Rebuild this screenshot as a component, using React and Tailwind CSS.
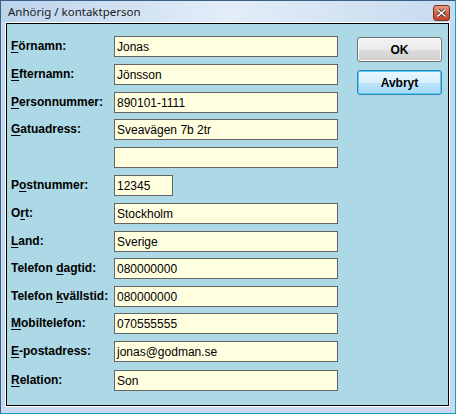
const fields = [
  { label: 'Förnamn:', key: 0, value: 'Jonas', gap: '' },
  { label: 'Efternamn:', key: 0, value: 'Jönsson', gap: 'mt-[7px]' },
  { label: 'Personnummer:', key: 0, value: '890101-1111', gap: 'mt-[7px]' },
  { label: 'Gatuadress:', key: 0, value: 'Sveavägen 7b 2tr', gap: 'mt-[6px]' },
  { label: '', key: -1, value: '', gap: 'mt-[7px]' },
  { label: 'Postnummer:', key: 1, value: '12345', short: true, gap: 'mt-[7px]' },
  { label: 'Ort:', key: 1, value: 'Stockholm', gap: 'mt-[7px]' },
  { label: 'Land:', key: 0, value: 'Sverige', gap: 'mt-[7px]' },
  { label: 'Telefon dagtid:', key: 8, value: '080000000', gap: 'mt-[6px]' },
  { label: 'Telefon kvällstid:', key: 8, value: '080000000', gap: 'mt-[7px]' },
  { label: 'Mobiltelefon:', key: 0, value: '070555555', gap: 'mt-[6px]' },
  { label: 'E-postadress:', key: 0, value: 'jonas@godman.se', gap: 'mt-[7px]' },
  { label: 'Relation:', key: 0, value: 'Son', gap: 'mt-[8px]' },
];

function Label({ text, idx }) {
  if (idx < 0) return null;
  return (
    <span>
      {text.slice(0, idx)}
      <u className="underline-offset-[2px]">{text[idx]}</u>
      {text.slice(idx + 1)}
    </span>
  );
}

export default function App() {
  return (
    <div className="flex h-[414px] w-[456px] flex-col border border-[#3b5f85] border-b-[#1b9bc7] border-r-[#1b9bc7] bg-[#c6daef]">
      {/* title bar */}
      <div className="flex h-[21px] items-center bg-gradient-to-r from-[#bcd3ec] via-[#e2edf8] to-[#c7daef] pl-[7px] font-['Noto_Sans',sans-serif] text-[11.5px] text-[#1a1a1a]">
        <span className="mt-[1px]">Anhörig / kontaktperson</span>
        <div className="ml-auto mr-[5px] mt-[3px] flex h-[16px] w-[17px] items-center justify-center rounded-[3px] border border-[#7a3425] bg-gradient-to-b from-[#e99a84] via-[#d5644a] to-[#c23f25]">
          <svg width="9" height="8" viewBox="0 0 9 8">
            <path d="M1 1 L8 7 M8 1 L1 7" stroke="#3a1a14" strokeWidth="3" strokeLinecap="square" />
            <path d="M1 1 L8 7 M8 1 L1 7" stroke="#ffffff" strokeWidth="1.6" strokeLinecap="square" />
          </svg>
        </div>
      </div>

      {/* client area */}
      <div className="mb-[6px] ml-[4px] mr-[5px] flex flex-1 border border-white">
        <div className="flex flex-1 border border-black bg-[#add8e6] pl-[4px] pt-[12px] font-['Liberation_Sans',Arial,sans-serif] text-[12px] text-black">
          <div className="flex flex-col">
            {fields.map((f, i) => (
              <div key={i} className={`flex h-[21px] ${f.gap}`}>
                <div className="flex w-[103px] items-center pb-[1px] font-bold">
                  <Label text={f.label} idx={f.key} />
                </div>
                <div
                  className={`flex items-center border border-[#646464] bg-[#ffffe0] pl-[2px] ${f.short ? 'w-[59px]' : 'w-[224px]'}`}
                >
                  {f.value}
                </div>
              </div>
            ))}
          </div>

          <div className="ml-[19px] mt-[1px] flex flex-col gap-[8px]">
            <button className="h-[25px] w-[85px] rounded-[3px] border border-[#707070] bg-[linear-gradient(#f2f2f2_0%,#ebebeb_50%,#dddddd_51%,#cfcfcf_100%)] text-[12px] font-bold text-black shadow-[inset_0_0_0_1px_#fcfcfc]">
              OK
            </button>
            <button className="h-[25px] w-[85px] rounded-[3px] border border-[#3c7fb1] bg-[linear-gradient(#eaf6fd_0%,#d9f0fc_50%,#bee6fd_51%,#a7d9f5_100%)] text-[12px] font-bold text-black shadow-[inset_0_0_0_1px_#48d1ff]">
              Avbryt
            </button>
          </div>
        </div>
      </div>
    </div>
  );
}
